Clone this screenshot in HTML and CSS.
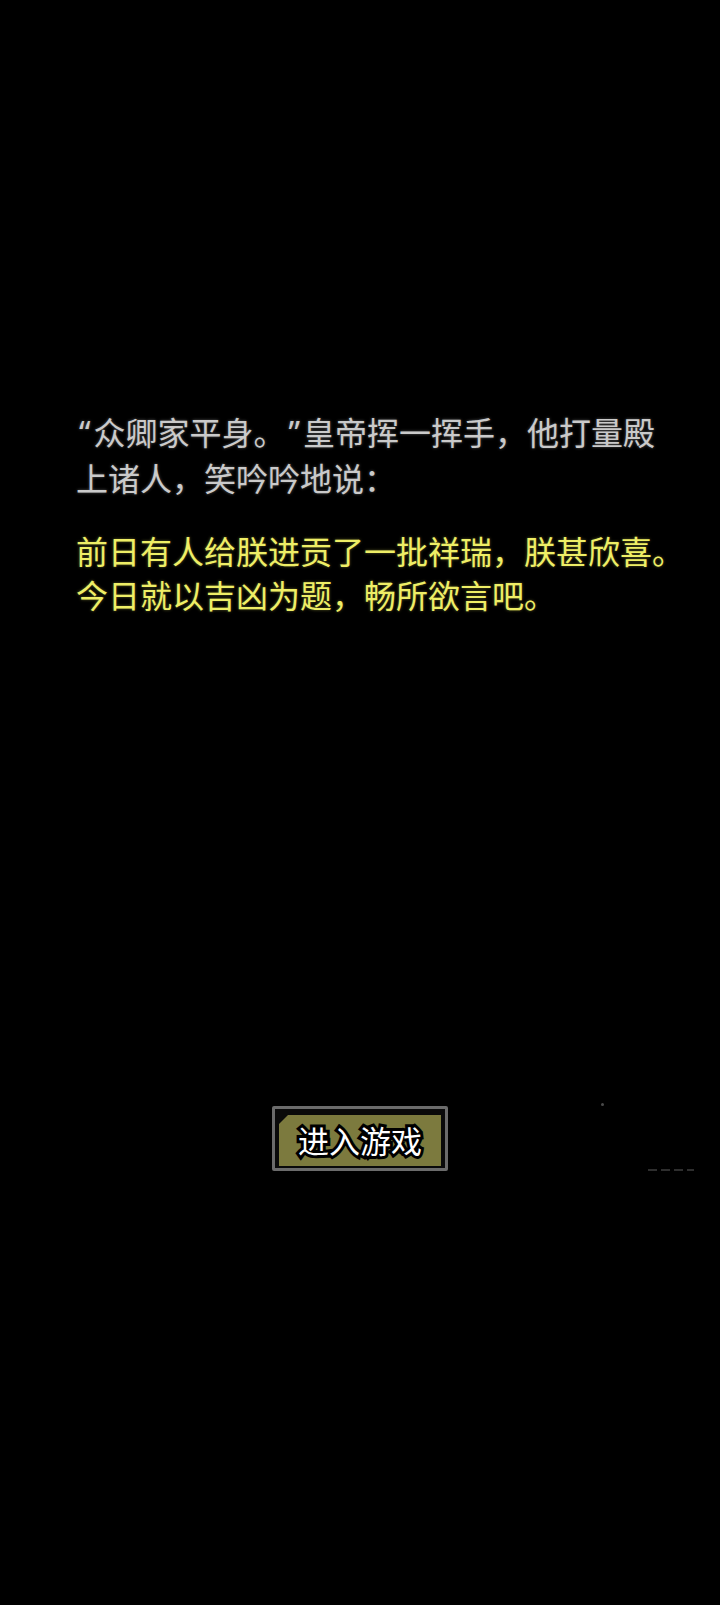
FILE: index.html
```html
<!DOCTYPE html>
<html lang="zh-CN">
<head>
    <meta charset="UTF-8">
    <meta name="viewport" content="width=device-width, initial-scale=1.0">
    <title>吉凶</title>
    <link rel="stylesheet" href="styles.css">
</head>
<body>
    <div class="screen">
        <div class="story">
            <p class="narration"><span class="q">“</span>众卿家平身。<span class="q">”</span>皇帝挥一挥手，他打量殿<br>上诸人，笑吟吟地说：</p>
            <p class="speech">前日有人给朕进贡了一批祥瑞，朕甚欣喜。<br>今日就以吉凶为题，畅所欲言吧。</p>
        </div>
        <div class="enter-wrap">
            <button class="enter-btn" aria-label="进入游戏">
                <span class="enter-face">进入游戏</span>
            </button>
        </div>
        <span class="speck"></span>
        <span class="dashes"></span>
    </div>
</body>
</html>
```

FILE: styles.css
```css
body {
    margin: 0;
    padding: 0;
    background-color: #000000;
    font-family: "Noto Sans CJK SC", "Noto Sans", sans-serif;
}
.screen {
    position: relative;
    min-height: 1605px;
    overflow: hidden;
}
.story {
    padding: 409px 0 0 76px;
}
.story p {
    margin: 0;
    font-size: 32px;
    line-height: 44px;
    white-space: nowrap;
    text-spacing-trim: space-all;
}
.story .q {
    font-family: "Noto Sans", sans-serif;
    padding: 0 3px;
}
.narration {
    color: #cacaca;
    text-shadow: 0 0 3px rgba(255, 255, 255, 0.35);
}
.speech {
    margin-top: 29px !important;
    color: #eeee66;
    text-shadow: 0 0 3px rgba(240, 240, 100, 0.4);
}
.enter-wrap {
    display: flex;
    justify-content: center;
    margin-top: 490px;
}
.enter-btn {
    display: block;
    width: 176px;
    height: 65px;
    margin: 0;
    padding: 6px 4px 2px 4px;
    border: 3px solid #6b6b6b;
    border-radius: 2px;
    background-color: #0a0a0a;
    box-sizing: border-box;
    cursor: pointer;
    font-family: inherit;
}
.enter-face {
    display: block;
    height: 51px;
    background-color: #7c7a3e;
    clip-path: polygon(9px 0, 100% 0, 100% 100%, 0 100%, 0 9px);
    color: #ffffff;
    font-size: 31px;
    line-height: 49px;
    text-align: center;
    -webkit-text-stroke: 6px #000000;
    paint-order: stroke fill;
}
.speck {
    position: absolute;
    left: 601px;
    top: 1103px;
    width: 3px;
    height: 3px;
    border-radius: 50%;
    background-color: #4a4a4a;
}
.dashes {
    position: absolute;
    left: 648px;
    top: 1169px;
    width: 46px;
    height: 2px;
    background: repeating-linear-gradient(90deg, #2e2e2e 0 9px, transparent 9px 13px);
}
```
